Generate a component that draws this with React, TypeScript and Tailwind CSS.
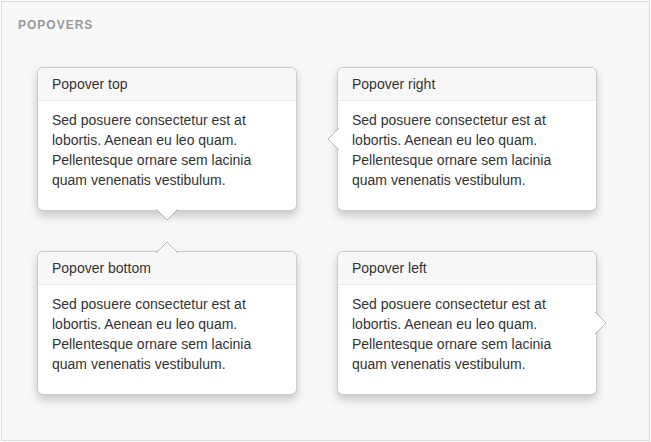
import React from 'react';

type Side = 'top' | 'right' | 'bottom' | 'left';

const body =
  'Sed posuere consectetur est at lobortis. Aenean eu leo quam. Pellentesque ornare sem lacinia quam venenatis vestibulum.';

// little triangle pointing away from the popover
function Arrow({ side }: { side: Side }) {
  if (side === 'top') {
    return (
      <svg className="absolute left-1/2 -translate-x-1/2 top-full -mt-px" width="22" height="12" viewBox="0 0 22 12">
        <path d="M0 0 L11 11 L22 0" fill="#fff" stroke="rgba(0,0,0,0.25)" strokeWidth="1" />
      </svg>
    );
  }
  if (side === 'bottom') {
    return (
      <svg className="absolute left-1/2 -translate-x-1/2 bottom-full -mb-px" width="22" height="12" viewBox="0 0 22 12">
        <path d="M0 12 L11 1 L22 12" fill="#f7f7f7" stroke="rgba(0,0,0,0.25)" strokeWidth="1" />
      </svg>
    );
  }
  if (side === 'right') {
    return (
      <svg className="absolute top-1/2 -translate-y-1/2 right-full -mr-px" width="12" height="22" viewBox="0 0 12 22">
        <path d="M12 0 L1 11 L12 22" fill="#fff" stroke="rgba(0,0,0,0.25)" strokeWidth="1" />
      </svg>
    );
  }
  return (
    <svg className="absolute top-1/2 -translate-y-1/2 left-full -ml-px" width="12" height="22" viewBox="0 0 12 22">
      <path d="M0 0 L11 11 L0 22" fill="#fff" stroke="rgba(0,0,0,0.25)" strokeWidth="1" />
    </svg>
  );
}

function Popover({ side }: { side: Side }) {
  return (
    <div className="relative bg-white border border-black/20 rounded-[6px] shadow-[0_5px_10px_rgba(0,0,0,0.2)] h-[144px]">
      <div className="bg-[#f7f7f7] border-b border-[#ebebeb] rounded-t-[5px] px-[14px] py-[8px] text-[14px] leading-[16px] text-[#333]">
        Popover {side}
      </div>
      <div className="px-[14px] pt-[9px] text-[14px] leading-[20px] text-[#333]">
        <p>{body}</p>
      </div>
      <Arrow side={side} />
    </div>
  );
}

export default function App() {
  return (
    <div className="w-[651px] h-[442px] bg-white p-px" style={{ fontFamily: '"Liberation Sans", Arial, sans-serif' }}>
      <div className="h-full border border-[#dddddd] bg-[#f8f8f8] pt-[15px] pl-[16px]">
        <h3 className="text-[12px] leading-[17px] font-bold tracking-[1px] uppercase text-[#999]">Popovers</h3>
        <div className="mt-[33px] ml-[19px] grid grid-cols-[260px_260px] gap-x-[40px] gap-y-[40px]">
          <Popover side="top" />
          <Popover side="right" />
          <Popover side="bottom" />
          <Popover side="left" />
        </div>
      </div>
    </div>
  );
}
